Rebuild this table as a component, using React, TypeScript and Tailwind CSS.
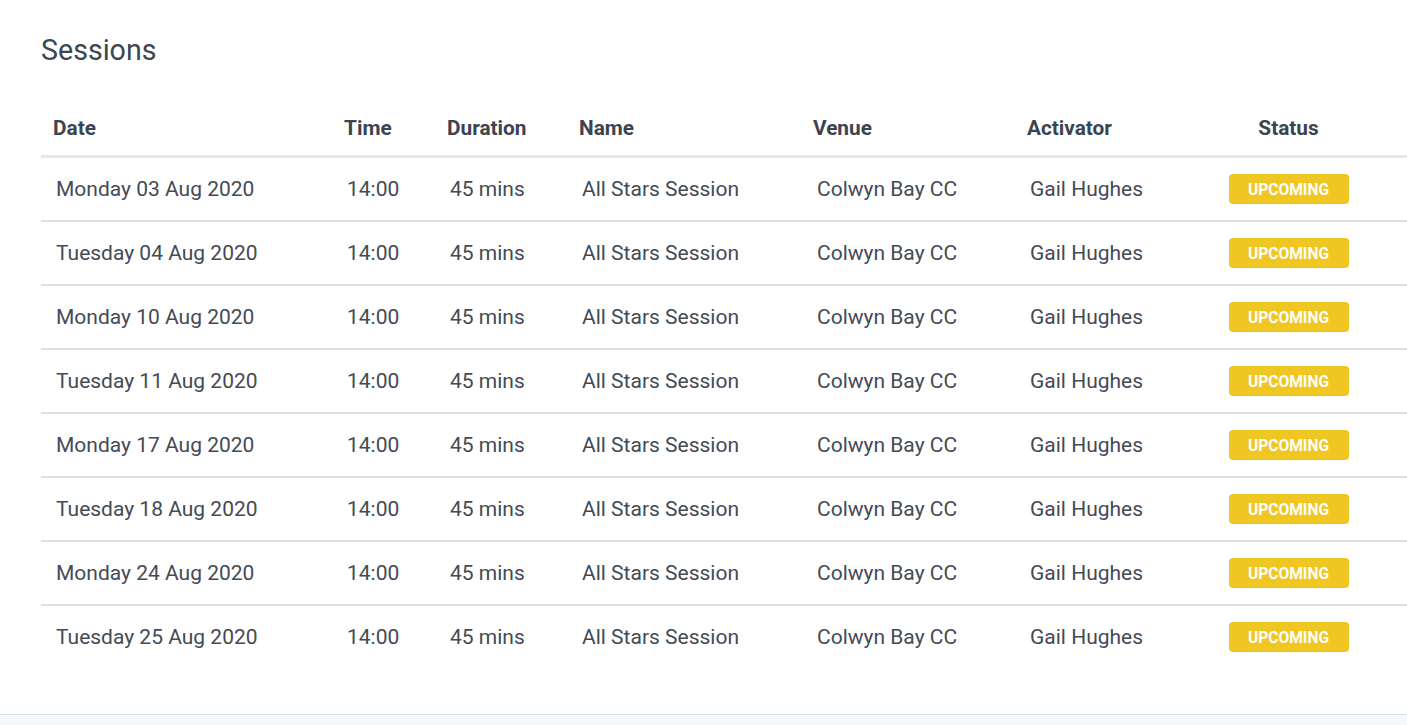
type Session = {
  date: string;
  time: string;
  duration: string;
  name: string;
  venue: string;
  activator: string;
  status: string;
};

const sessions: Session[] = [
  "Monday 03 Aug 2020",
  "Tuesday 04 Aug 2020",
  "Monday 10 Aug 2020",
  "Tuesday 11 Aug 2020",
  "Monday 17 Aug 2020",
  "Tuesday 18 Aug 2020",
  "Monday 24 Aug 2020",
  "Tuesday 25 Aug 2020",
].map((date) => ({
  date,
  time: "14:00",
  duration: "45 mins",
  name: "All Stars Session",
  venue: "Colwyn Bay CC",
  activator: "Gail Hughes",
  status: "Upcoming",
}));

export default function App() {
  return (
    <div className="min-h-screen bg-[#f5f7fb] font-['Roboto',sans-serif]">
      <div className="bg-white border-b border-[#d7dfe9] pl-[41px] pt-[33px] pb-[45px]">
        <h1 className="text-[28.6px] leading-[34px] text-[#3d4653]">Sessions</h1>

        <table className="mt-[34px] w-[1366px] table-fixed border-collapse text-left">
          <colgroup>
            <col className="w-[291px]" />
            <col className="w-[103px]" />
            <col className="w-[132px]" />
            <col className="w-[234px]" />
            <col className="w-[214px]" />
            <col className="w-[155px]" />
            <col className="w-[237px]" />
          </colgroup>
          <thead>
            <tr className="border-b-[3px] border-[#e4e8ec] text-[20.8px] leading-[26px] font-bold text-[#3c4450]">
              <th className="pl-3 pt-[14px] pb-[14px]">Date</th>
              <th className="pl-3 pt-[14px] pb-[14px]">Time</th>
              <th className="pl-3 pt-[14px] pb-[14px]">Duration</th>
              <th className="pl-3 pt-[14px] pb-[14px]">Name</th>
              <th className="pl-3 pt-[14px] pb-[14px]">Venue</th>
              <th className="pl-3 pt-[14px] pb-[14px]">Activator</th>
              <th className="pt-[14px] pb-[14px] text-center">Status</th>
            </tr>
          </thead>
          <tbody>
            {sessions.map((s, i) => (
              <tr
                key={s.date}
                className={`text-[21px] leading-[26px] text-[#434b55] ${i < sessions.length - 1 ? "border-b-2 border-[#dedede]" : ""}`}
              >
                <td className="h-[64px] p-0 pl-[15px] align-middle">{s.date}</td>
                <td className="h-[64px] p-0 pl-[15px] align-middle">{s.time}</td>
                <td className="h-[64px] p-0 pl-[15px] align-middle">{s.duration}</td>
                <td className="h-[64px] p-0 pl-[15px] align-middle">{s.name}</td>
                <td className="h-[64px] p-0 pl-4 align-middle">{s.venue}</td>
                <td className="h-[64px] p-0 pl-[15px] align-middle">{s.activator}</td>
                <td className="h-[64px] p-0 align-middle text-center">
                  <span className="inline-block align-middle w-[120px] h-[30px] rounded-[4px] bg-[#f0c622] text-white text-[15.6px] font-bold uppercase leading-[32px]">
                    {s.status}
                  </span>
                </td>
              </tr>
            ))}
          </tbody>
        </table>
      </div>
    </div>
  );
}
